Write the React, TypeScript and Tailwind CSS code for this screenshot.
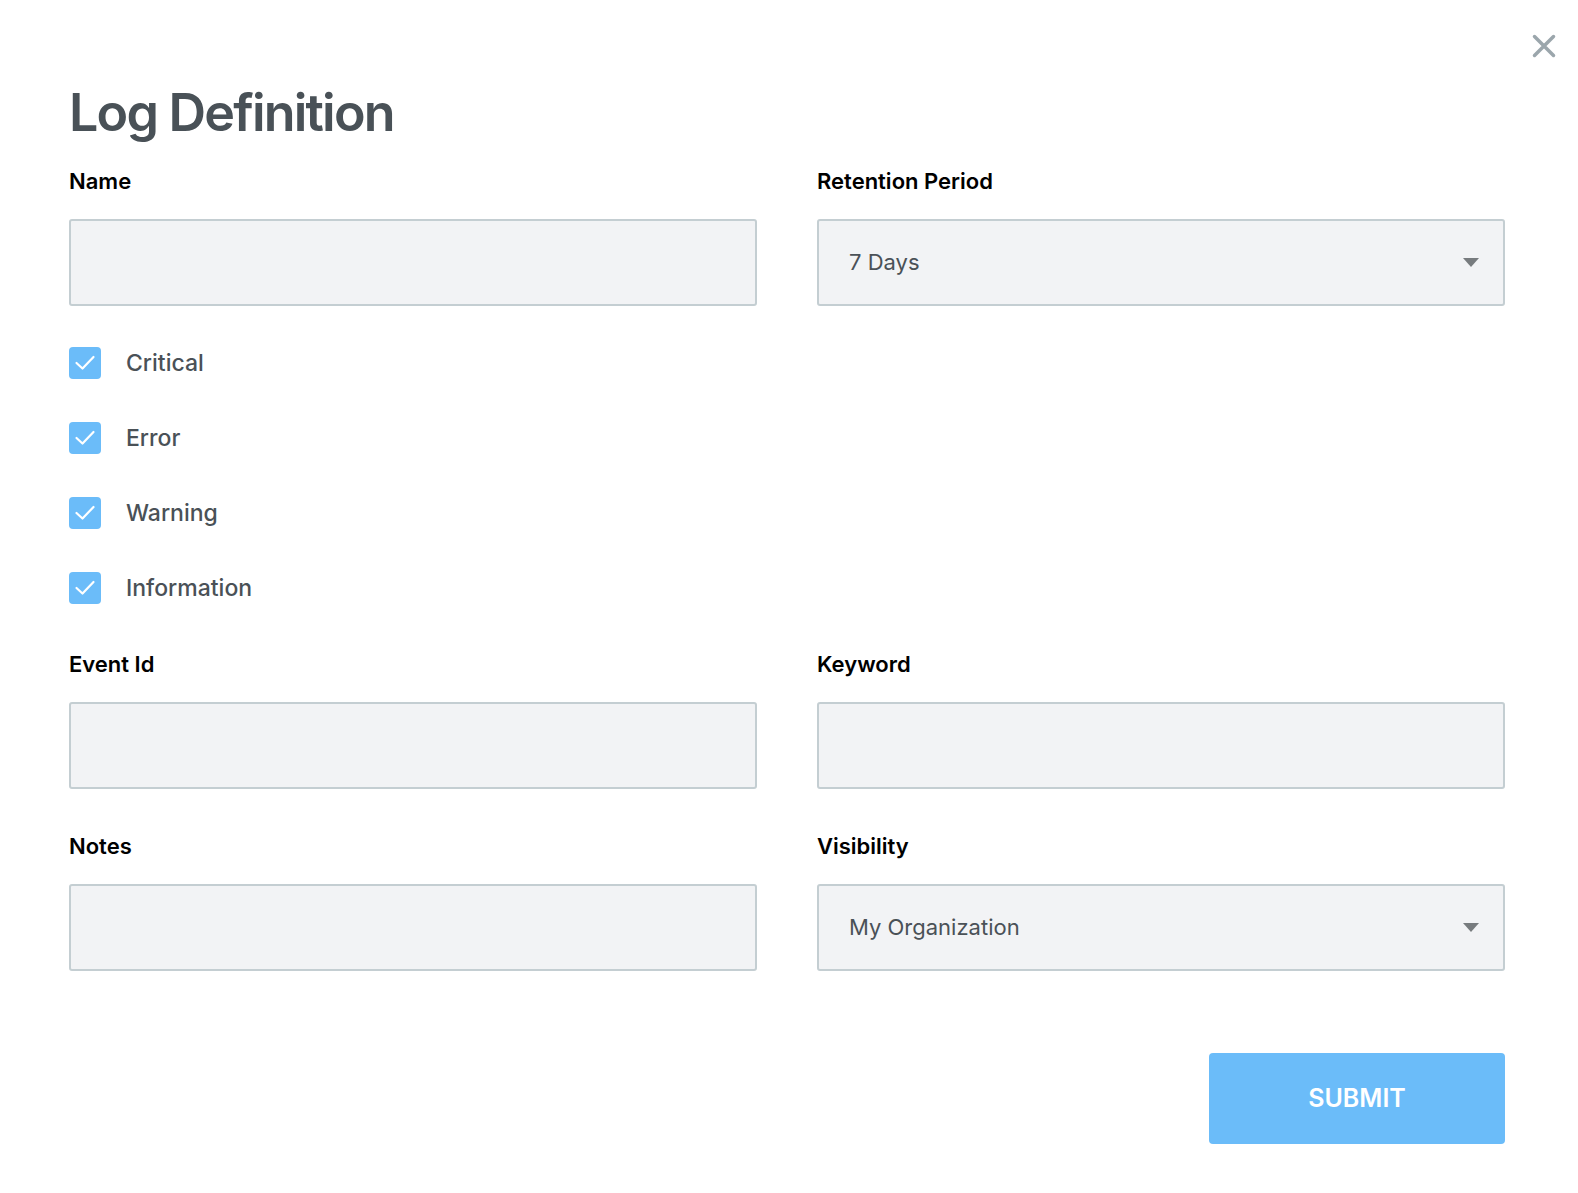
import React from "react";

const font = { fontFamily: "Inter, 'Noto Sans', sans-serif" };

function Check({ label }: { label: string }) {
  return (
    <div className="flex h-[32px] items-center">
      <div className="flex h-[32px] w-[32px] items-center justify-center rounded-[4px] bg-[#6bbcf9]">
        <svg width="24" height="24" viewBox="0 0 24 24" fill="none">
          <path d="M3.5 12 L9.5 17.5 L20.5 6" stroke="white" strokeWidth="2.2" strokeLinecap="round" strokeLinejoin="round" />
        </svg>
      </div>
      <span className="ml-[25px] text-[23px] font-medium text-[#4a5157]">{label}</span>
    </div>
  );
}

function Field({ label, value, select }: { label: string; value?: string; select?: boolean }) {
  return (
    <div className="flex flex-col">
      <div className="h-[24px] text-[22px] font-semibold leading-[24px] text-black">{label}</div>
      <div className="mt-[26px] flex h-[87px] items-center justify-between rounded-[3px] border-2 border-[#c4ced2] bg-[#f2f3f5] pl-[30px] pr-[24px]">
        <span className="text-[22px] text-[#4a5157]">{value ?? ""}</span>
        {select && (
          <svg width="16" height="10" viewBox="0 0 16 10">
            <path d="M0 0 H16 L8 9 Z" fill="#777b7e" />
          </svg>
        )}
      </div>
    </div>
  );
}

export default function App() {
  return (
    <div className="relative min-h-screen bg-white pl-[69px] pr-[73px] pt-[81px]" style={font}>
      <button className="absolute right-[22px] top-[34px] h-[24px] w-[24px]" aria-label="close">
        <svg width="24" height="24" viewBox="0 0 24 24">
          <path d="M2.5 2.5 L21.5 21.5 M21.5 2.5 L2.5 21.5" stroke="#9ba6ac" strokeWidth="3.5" strokeLinecap="round" />
        </svg>
      </button>
      <h1 className="text-[52px] font-semibold leading-[64px] tracking-[-1.8px] text-[#495157]">Log Definition</h1>
      <div className="mt-[24px] grid grid-cols-2 gap-x-[60px]">
        <Field label="Name" />
        <Field label="Retention Period" value="7 Days" select />
      </div>
      <div className="mt-[41px] flex flex-col gap-[43px]">
        <Check label="Critical" />
        <Check label="Error" />
        <Check label="Warning" />
        <Check label="Information" />
      </div>
      <div className="mt-[48px] grid grid-cols-2 gap-x-[60px] gap-y-[45px]">
        <Field label="Event Id" />
        <Field label="Keyword" />
        <Field label="Notes" />
        <Field label="Visibility" value="My Organization" select />
      </div>
      <div className="mt-[82px] flex justify-end">
        <button className="flex h-[91px] w-[296px] items-center justify-center rounded-[4px] bg-[#6bbcf9] text-[25px] font-semibold text-white">
          SUBMIT
        </button>
      </div>
    </div>
  );
}
